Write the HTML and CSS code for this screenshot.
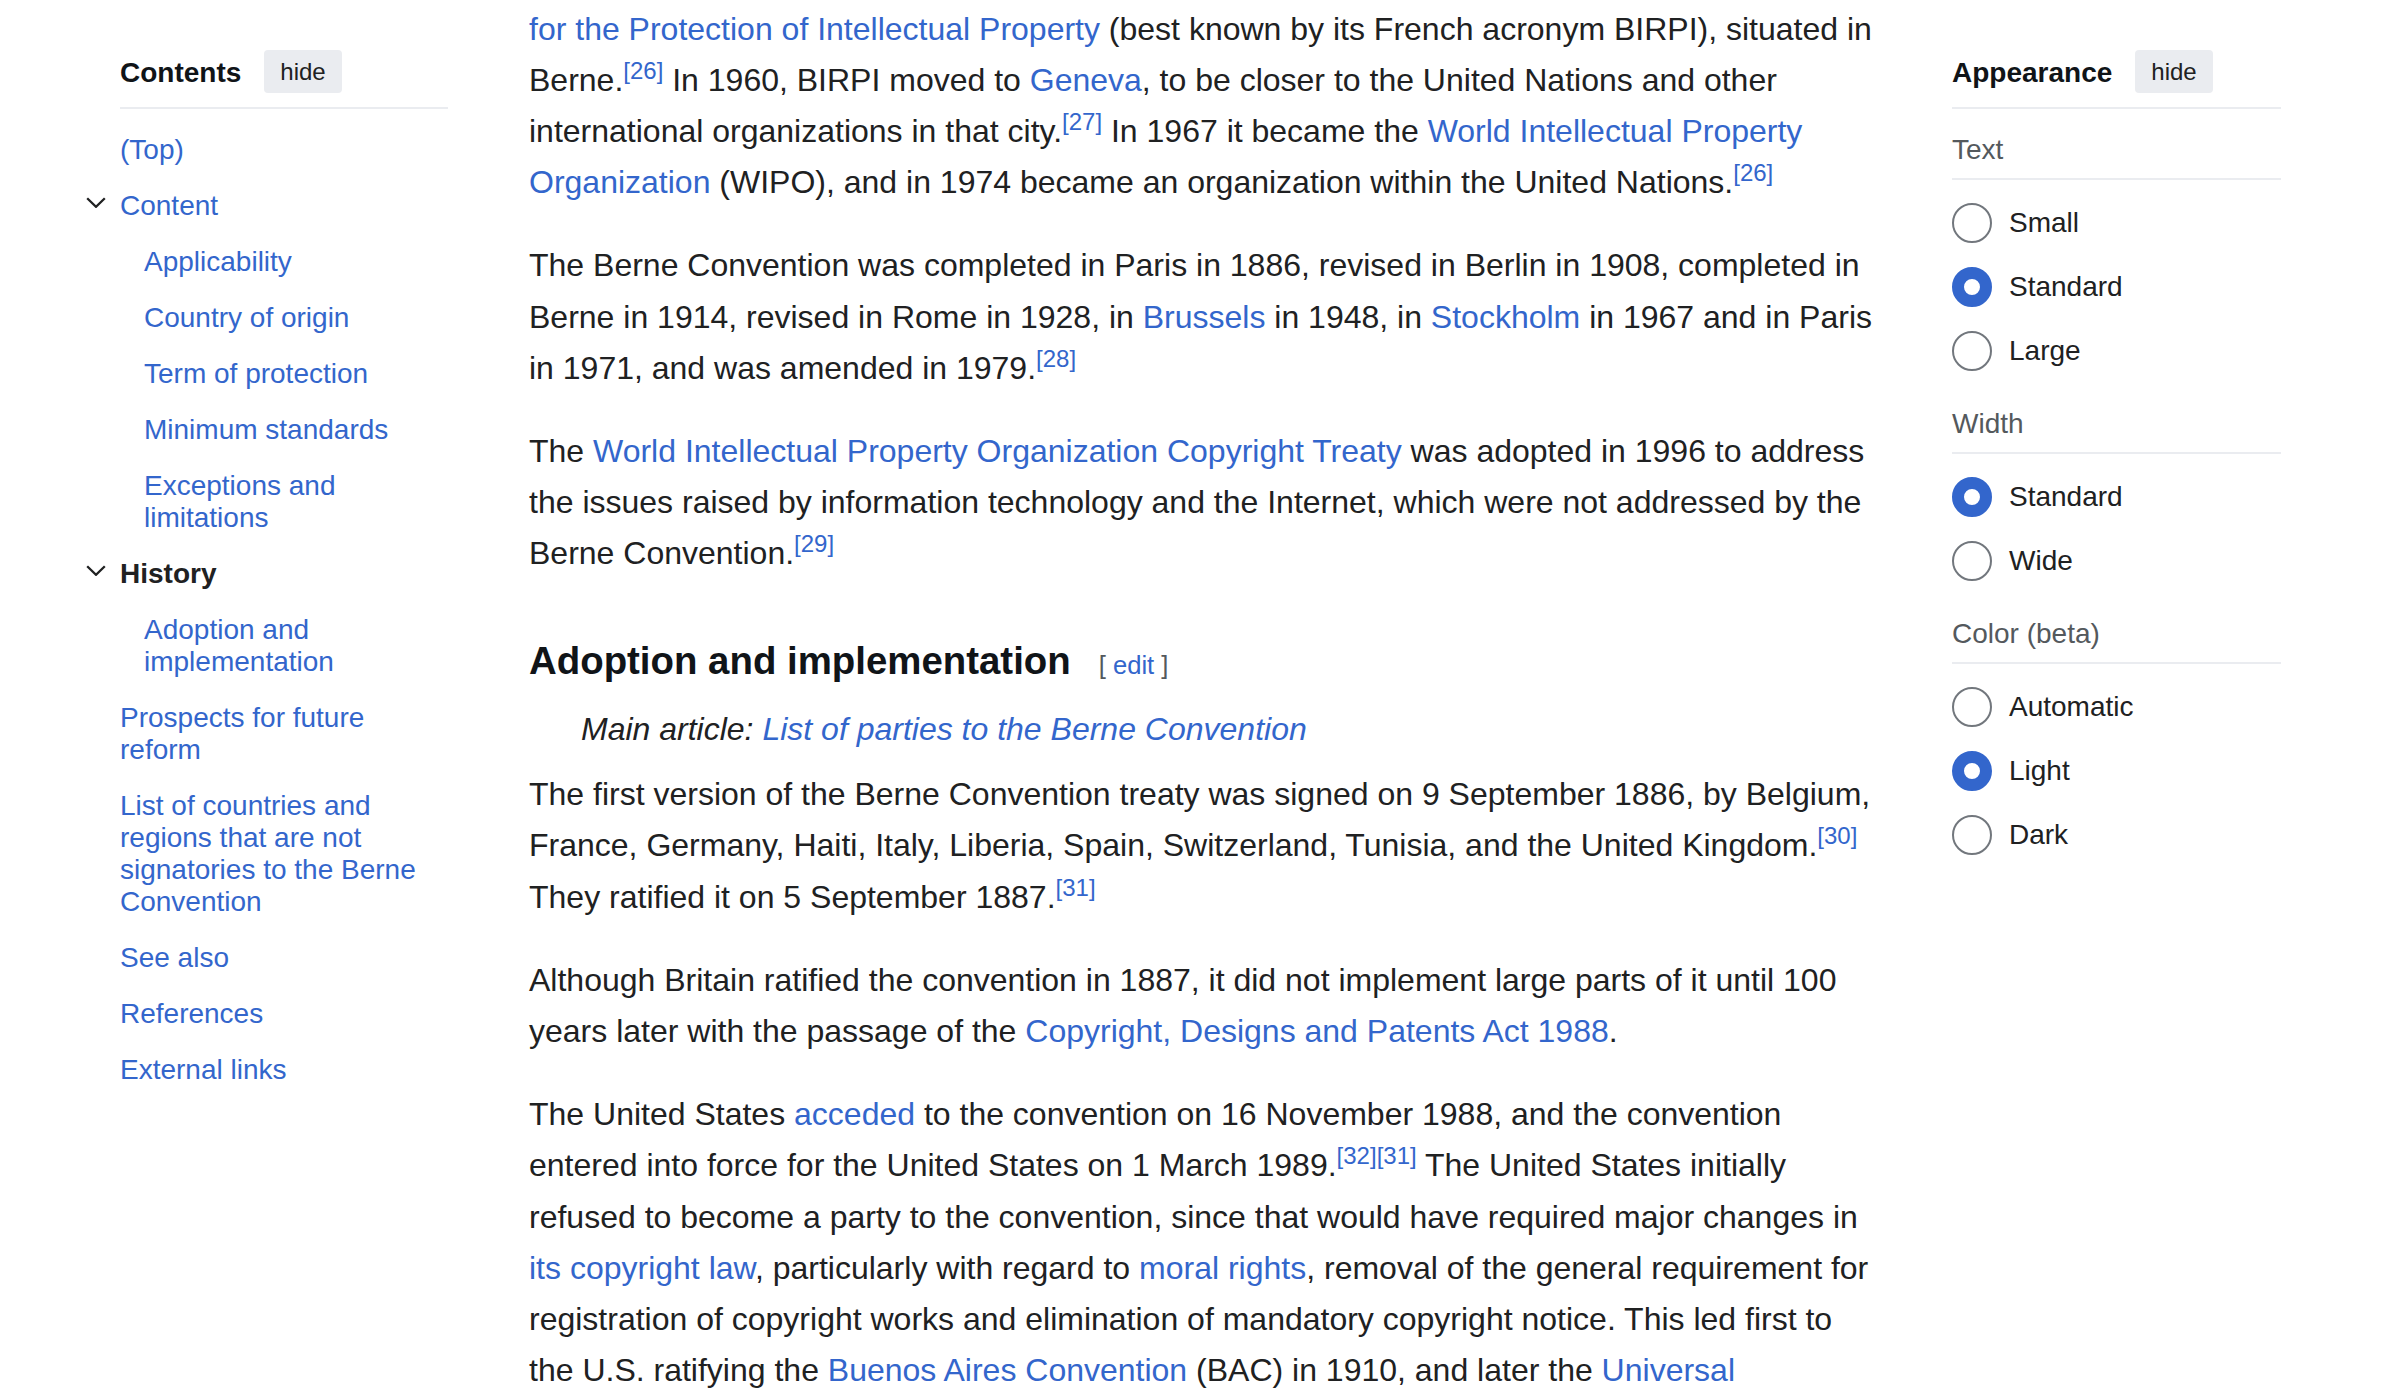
FILE: index.html
```html
<!DOCTYPE html>
<html lang="en">
<head>
<meta charset="utf-8">
<title>Berne Convention</title>
<link rel="stylesheet" href="styles.css">
</head>
<body>
<div class="page">
  <nav class="toc">
    <div class="panel-head">
      <span class="panel-title">Contents</span>
      <button class="hide-btn">hide</button>
    </div>
    <ul class="toc-list">
      <li class="toc-item"><a class="toc-link" href="#">(Top)</a></li>
      <li class="toc-item">
        <span class="toc-toggle"><svg width="20" height="11" viewBox="0 0 20 11"><path d="M1.2 1.2L10 9.8l8.8-8.6" fill="none" stroke="#202122" stroke-width="2.3"/></svg></span>
        <a class="toc-link" href="#">Content</a>
        <ul class="toc-sublist">
          <li class="toc-item"><a class="toc-link" href="#">Applicability</a></li>
          <li class="toc-item"><a class="toc-link" href="#">Country of origin</a></li>
          <li class="toc-item"><a class="toc-link" href="#">Term of protection</a></li>
          <li class="toc-item"><a class="toc-link" href="#">Minimum standards</a></li>
          <li class="toc-item"><a class="toc-link" href="#">Exceptions and limitations</a></li>
        </ul>
      </li>
      <li class="toc-item">
        <span class="toc-toggle"><svg width="20" height="11" viewBox="0 0 20 11"><path d="M1.2 1.2L10 9.8l8.8-8.6" fill="none" stroke="#202122" stroke-width="2.3"/></svg></span>
        <a class="toc-link toc-link--active" href="#">History</a>
        <ul class="toc-sublist">
          <li class="toc-item"><a class="toc-link" href="#">Adoption and implementation</a></li>
        </ul>
      </li>
      <li class="toc-item"><a class="toc-link" href="#">Prospects for future reform</a></li>
      <li class="toc-item"><a class="toc-link" href="#">List of countries and regions that are not signatories to the Berne Convention</a></li>
      <li class="toc-item"><a class="toc-link" href="#">See also</a></li>
      <li class="toc-item"><a class="toc-link" href="#">References</a></li>
      <li class="toc-item"><a class="toc-link" href="#">External links</a></li>
    </ul>
  </nav>

  <main class="content">
    <p><a href="#">for the Protection of Intellectual Property</a> (best known by its French acronym BIRPI), situated in Berne.<sup class="ref"><a href="#">[26]</a></sup> In 1960, BIRPI moved to <a href="#">Geneva</a>, to be closer to the United Nations and other international organizations in that city.<sup class="ref"><a href="#">[27]</a></sup> In 1967 it became the <a href="#">World Intellectual Property Organization</a> (WIPO), and in 1974 became an organization within the United Nations.<sup class="ref"><a href="#">[26]</a></sup></p>
    <p>The Berne Convention was completed in Paris in 1886, revised in Berlin in 1908, completed in Berne in 1914, revised in Rome in 1928, in <a href="#">Brussels</a> in 1948, in <a href="#">Stockholm</a> in 1967 and in Paris in 1971, and was amended in 1979.<sup class="ref"><a href="#">[28]</a></sup></p>
    <p>The <a href="#">World Intellectual Property Organization Copyright Treaty</a> was adopted in 1996 to address the issues raised by information technology and the Internet, which were not addressed by the Berne Convention.<sup class="ref"><a href="#">[29]</a></sup></p>
    <h3 class="section-heading"><span>Adoption and implementation</span><span class="editsection"><span class="bracket">[</span> <a href="#">edit</a> <span class="bracket">]</span></span></h3>
    <div class="hatnote">Main article: <a href="#">List of parties to the Berne Convention</a></div>
    <p>The first version of the Berne Convention treaty was signed on 9 September 1886, by Belgium, France, Germany, Haiti, Italy, Liberia, Spain, Switzerland, Tunisia, and the United Kingdom.<sup class="ref"><a href="#">[30]</a></sup> They ratified it on 5 September 1887.<sup class="ref"><a href="#">[31]</a></sup></p>
    <p>Although Britain ratified the convention in 1887, it did not implement large parts of it until 100 years later with the passage of the <a href="#">Copyright, Designs and Patents Act 1988</a>.</p>
    <p>The United States <a href="#">acceded</a> to the convention on 16 November 1988, and the convention entered into force for the United States on 1 March 1989.<sup class="ref"><a href="#">[32]</a><a href="#">[31]</a></sup> The United States initially refused to become a party to the convention, since that would have required major changes in <a href="#">its copyright law</a>, particularly with regard to <a href="#">moral rights</a>, removal of the general requirement for registration of copyright works and elimination of mandatory copyright notice. This led first to the U.S. ratifying the <a href="#">Buenos Aires Convention</a> (BAC) in 1910, and later the <a href="#">Universal Copyright Convention</a> (UCC) in 1955 to satisfy wishes of other countries.</p>
  </main>

  <aside class="appearance">
    <div class="panel-head">
      <span class="panel-title">Appearance</span>
      <button class="hide-btn">hide</button>
    </div>
    <div class="group">
      <div class="group-label">Text</div>
      <div class="radio-list">
        <label class="radio-row"><input class="radio" type="radio" name="text"> Small</label>
        <label class="radio-row"><input class="radio" type="radio" name="text" checked> Standard</label>
        <label class="radio-row"><input class="radio" type="radio" name="text"> Large</label>
      </div>
    </div>
    <div class="group">
      <div class="group-label">Width</div>
      <div class="radio-list">
        <label class="radio-row"><input class="radio" type="radio" name="width" checked> Standard</label>
        <label class="radio-row"><input class="radio" type="radio" name="width"> Wide</label>
      </div>
    </div>
    <div class="group">
      <div class="group-label">Color (beta)</div>
      <div class="radio-list">
        <label class="radio-row"><input class="radio" type="radio" name="color"> Automatic</label>
        <label class="radio-row"><input class="radio" type="radio" name="color" checked> Light</label>
        <label class="radio-row"><input class="radio" type="radio" name="color"> Dark</label>
      </div>
    </div>
  </aside>
</div>
</body>
</html>
```

FILE: styles.css
```css
html {
  overflow: hidden;
}

body {
  margin: 0;
  background: #ffffff;
  color: #202122;
  font-family: "Liberation Sans", Arial, sans-serif;
}

a {
  color: #3366cc;
  text-decoration: none;
}

.page {
  display: flex;
  align-items: flex-start;
  padding: 0 119px 0 120px;
}

/* ---------- side panels ---------- */

.panel-head {
  display: flex;
  align-items: center;
  height: 43px;
  padding-bottom: 14px;
  border-bottom: 2px solid #eaecf0;
}

.panel-title {
  padding-top: 3px;
  font-size: 28px;
  line-height: 32px;
  font-weight: bold;
  color: #101418;
}

.hide-btn {
  margin-left: 23px;
  height: 43px;
  padding: 0 16px;
  border: 0;
  border-radius: 4px;
  background: #eaecf0;
  color: #202122;
  font-family: "Liberation Sans", Arial, sans-serif;
  font-size: 24px;
  line-height: 43px;
}

/* ---------- table of contents ---------- */

.toc {
  flex: none;
  width: 328px;
  padding-top: 50px;
}

.toc-list {
  list-style: none;
  margin: 0;
  padding: 13px 0 0;
}

.toc-sublist {
  list-style: none;
  margin: 0;
  padding: 0 0 0 24px;
}

.toc-item {
  position: relative;
}

.toc-link {
  display: block;
  padding: 12px 0;
  font-size: 28px;
  line-height: 32px;
  color: #3366cc;
}

.toc-link--active {
  color: #202122;
  font-weight: bold;
}

.toc-toggle {
  position: absolute;
  left: -34px;
  top: 19px;
  width: 20px;
  height: 11px;
  display: flex;
}

/* ---------- article ---------- */

.content {
  flex: none;
  width: 1350px;
  margin-left: 81px;
  padding-top: 3.5px;
  font-size: 32px;
  line-height: 51.2px;
}

.content p {
  margin: 0 0 32px;
}

.ref {
  font-size: 24px;
  line-height: 1;
  vertical-align: super;
}

.section-heading {
  margin: 50px 0 8px;
  font-size: 38.4px;
  line-height: 61.44px;
  font-weight: bold;
  color: #101418;
}

.editsection {
  margin-left: 28px;
  font-size: 25.6px;
  font-weight: normal;
  color: #54595d;
}

.hatnote {
  margin: 0 0 14px;
  padding-left: 52px;
  font-style: italic;
  color: #202122;
}

/* ---------- appearance ---------- */

.appearance {
  flex: none;
  width: 329px;
  margin-left: auto;
  padding-top: 50px;
}

.group {
  margin-top: 25px;
}

.group-label {
  padding-bottom: 12px;
  border-bottom: 2px solid #eaecf0;
  font-size: 28px;
  line-height: 32px;
  color: #54595d;
}

.radio-list {
  padding-top: 11px;
}

.radio-row {
  display: flex;
  align-items: center;
  gap: 17px;
  height: 64px;
  font-size: 28px;
  color: #202122;
}

.radio {
  appearance: none;
  -webkit-appearance: none;
  flex: none;
  box-sizing: border-box;
  width: 40px;
  height: 40px;
  margin: 0;
  border: 2px solid #72777d;
  border-radius: 50%;
  background: #ffffff;
}

.radio:checked {
  border: 12px solid #3366cc;
}
```
